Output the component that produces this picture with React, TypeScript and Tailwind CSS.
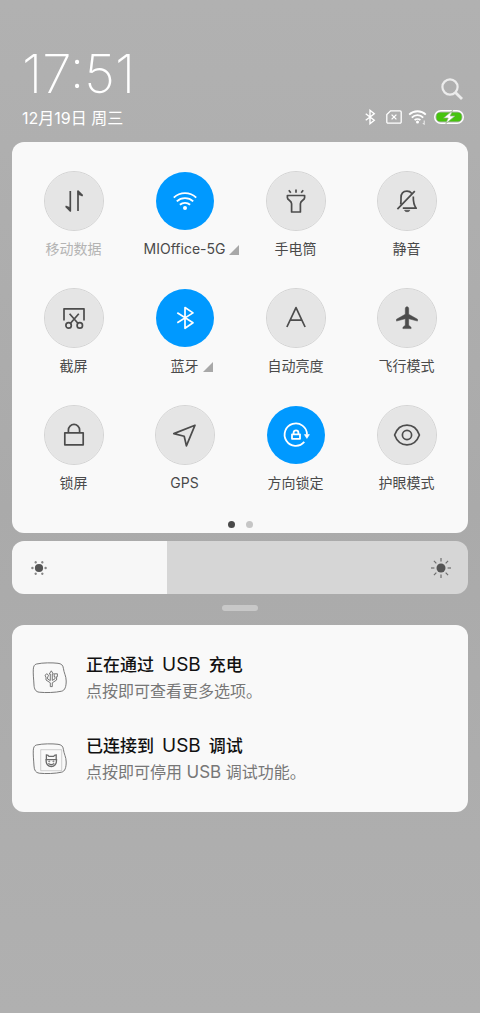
import React, { useState } from 'react'

interface Toggle {
  id: string
  label: string
  icon: React.ReactNode
  active?: boolean
  disabled?: boolean
  expandable?: boolean
}

interface Notice {
  id: string
  before: string
  after: string
  body: React.ReactNode
  icon: React.ReactNode
}

const icons = {
  data: (
    <>
      <path d="M11.3 5v20L6.8 20.4M19 25V5l4.5 4.6" />
      <path d="M11.3 25v-3.5L6.6 20zM19 5v3.5l4.7 1.5z" fill="currentColor" strokeWidth="0.6" />
    </>
  ),
  wifi: (
    <>
      <path d="M3.8 11.6a16.3 16.3 0 0 1 22.4 0M6.8 15.4a12 12 0 0 1 16.4 0M9.9 18.8a7.6 7.6 0 0 1 10.2 0" strokeWidth="1.9" />
      <circle cx="15" cy="22" r="2" fill="currentColor" stroke="none" />
    </>
  ),
  torch: (
    <path d="M6.4 9.5h17.2v2.2c0 2.600-4.200 2.600-4.200 6V26h-8.800v-8.300c0-3.400-4.200-3.400-4.200-6zM15 3.400v3.400M7.800 4.200l2 2.600M22.200 4.200l-2 2.600" />
  ),
  mute: (
    <>
      <path d="M8.600 18.600c.5-1.600.4-3.600.4-6.600 0-4.400 2.500-6.800 6-6.800 2 0 3.500.7 4.600 2.100M21.300 10.500c-.2 6.200.3 8.300 2.900 11.700H10.800M5.400 23.200 22.800 5.200" />
      <path d="M12.500 24.200h5.400c-.7 2-4.700 2-5.400 0z" fill="currentColor" strokeWidth="0.5" />
    </>
  ),
  scissors: (
    <>
      <path d="M5 17.5V5.8h20v11.7M10.600 10.800l8.300 9.400M19.800 10.800l-8.300 9.400" />
      <circle cx="9.6" cy="22.4" r="2.7" />
      <circle cx="20.8" cy="22.4" r="2.7" />
    </>
  ),
  bluetooth: <path d="M7.3 9.7 23 19.7 15 25.3V4.500l8 5.400L7.300 19.700" />,
  auto: <path d="M5.900 24 15 4.600 24.100 24M9.300 17.200h11.400" />,
  plane: (
    <path
      d="M13.3 5.600c0-2.400 3.400-2.400 3.400 0v5.700l8.800 4.900v1.900l-8.800-2.400v6.600l2.400 2v1.300h-8.200v-1.300l2.400-2v-6.600l-8.800 2.400v-1.900l8.800-4.900z"
      fill="currentColor"
      strokeWidth="0.5"
    />
  ),
  lock: <path d="M5.800 12.800h18.400v12H5.800zM9.400 12.600V10a5.600 5.600 0 0 1 11.200 0v2.600" />,
  gps: <path d="M25 5.200 3.800 13.600l10.400 2.600 2.200 9.600z" />,
  rotation: (
    <>
      <path d="M23.300 21.900A11.200 11.200 0 1 1 26 14.600M11 14.300h8v4.500h-8zM12.600 14.200v-1.500a2.400 2.400 0 0 1 4.800 0v1.500" strokeWidth="1.8" />
      <path d="M23.400 14.600h5l-2.500 3.800z" fill="currentColor" strokeWidth="0.6" />
    </>
  ),
  eye: (
    <>
      <path d="M2.600 15C5 8.400 9.600 5.200 15 5.200s10 3.200 12.400 9.800C25 21.600 20.400 24.800 15 24.800S5 21.600 2.600 15z" />
      <circle cx="15" cy="15" r="4.6" />
    </>
  ),
}

const initialToggles: Toggle[] = [
  { id: 'data', label: '移动数据', icon: icons.data, disabled: true },
  { id: 'wifi', label: 'MIOffice-5G', icon: icons.wifi, active: true, expandable: true },
  { id: 'torch', label: '手电筒', icon: icons.torch },
  { id: 'mute', label: '静音', icon: icons.mute },
  { id: 'screenshot', label: '截屏', icon: icons.scissors },
  { id: 'bluetooth', label: '蓝牙', icon: icons.bluetooth, active: true, expandable: true },
  { id: 'brightness', label: '自动亮度', icon: icons.auto },
  { id: 'airplane', label: '飞行模式', icon: icons.plane },
  { id: 'lock', label: '锁屏', icon: icons.lock },
  { id: 'gps', label: 'GPS', icon: icons.gps },
  { id: 'rotation', label: '方向锁定', icon: icons.rotation, active: true },
  { id: 'eye', label: '护眼模式', icon: icons.eye },
]

const notices: Notice[] = [
  {
    id: 'charging',
    before: '正在通过',
    after: '充电',
    body: '点按即可查看更多选项。',
    icon: (
      <path
        d="M19.300 8.800l2 3.200h-1v6.400l2.700-1.600v-2.200h-.8v-2.800h3.200v2.800h-.8v3.400l-4.300 2.800v3.800h-2v-3.800l-4.300-2.800v-3a1.600 1.600 0 1 1 1.600 0v2l2.700 1.600V12h-1z"
        strokeWidth="0.9"
      />
    ),
  },
  {
    id: 'debugging',
    before: '已连接到',
    after: '调试',
    body: (
      <>
        点按即可停用 <span className="text-[17px]">USB</span> 调试功能。
      </>
    ),
    icon: (
      <>
        <path d="M8.7 6.700h21v21h-21z" strokeWidth="0.3" />
        <path d="M14.400 16.500v-4.700c1.400 0 2.200.7 2.600 1.600h4.600c.4-.9 1.200-1.600 2.600-1.600v4.700" strokeWidth="1.3" />
        <path d="M13.400 16.600h11.800M14.200 16.600c-1.200 9.200 11.400 9.200 10.200 0M16.400 20.400c1.400 1.500 4.400 1.500 5.800 0" strokeWidth="1.3" />
        <circle cx="17.200" cy="18.400" r="0.5" />
        <circle cx="21.400" cy="18.400" r="0.5" />
      </>
    ),
  },
]

function StatusIcons() {
  return (
    <div className="flex items-center gap-1.5 text-white">
      <svg width="16" height="16" viewBox="0 0 30 30" fill="none" stroke="currentColor" strokeWidth="2.6" className="mr-0.5">
        <path d="M7 9 23 21l-8 6.500v-25L23 9 7 21" />
      </svg>
      <svg width="16" height="14" viewBox="0 0 16 14" fill="none" stroke="currentColor" strokeWidth="1.3">
        <path d="M4.600.8H14a1.200 1.200 0 0 1 1.200 1.200v10a1.200 1.200 0 0 1-1.200 1.200H2A1.200 1.200 0 0 1 .8 12V4.600z" />
        <path d="M5.600 4.600l4.800 4.800M10.400 4.600 5.600 9.400" />
      </svg>
      <svg width="20" height="16" viewBox="0 0 20 16" fill="none" stroke="currentColor" strokeWidth="1.8">
        <path d="M1.200 5.600a12 12 0 0 1 16.600 0M3.800 8.600a8 8 0 0 1 11.400 0M6.600 11.200a4.200 4.200 0 0 1 5.800 0" />
        <circle cx="9.5" cy="13" r="1.5" fill="currentColor" stroke="none" />
        <path d="M16.200 11.500v4M14.800 14l1.400 1.500" strokeWidth="0.8" />
      </svg>
      <svg width="30" height="14" viewBox="0 0 30 14">
        <rect x="0.7" y="0.7" width="28.6" height="12.6" rx="6.3" fill="none" stroke="currentColor" strokeWidth="1.4" />
        <rect x="2.400" y="2.400" width="25.200" height="9.200" rx="4" fill="#46c40f" />
        <path d="M18.600.4 9.600 8h4.600l-2.400 5.600L21 6h-4.800z" fill="currentColor" stroke="#8fae80" strokeWidth="0.7" />
      </svg>
    </div>
  )
}

function ToggleTile({ toggle, onToggle }: { toggle: Toggle; onToggle: () => void }) {
  return (
    <button
      onClick={onToggle}
      disabled={toggle.disabled}
      aria-pressed={!!toggle.active}
      className="flex flex-col items-center gap-2"
    >
      <span
        className={`flex items-center justify-center w-15 h-15 rounded-full border bg-clip-padding ${
          toggle.active ? 'bg-[#0099ff] border-transparent text-white' : 'bg-[#e5e5e5] border-[#d4d4d4] text-[#4c4c4c]'
        }`}
      >
        <svg width="30" height="30" viewBox="0 0 30 30" fill="none" stroke="currentColor" strokeWidth="1.7" strokeLinejoin="round">
          {toggle.icon}
        </svg>
      </span>
      <span className={`relative text-sm leading-5 whitespace-nowrap ${toggle.disabled ? 'text-[#b4b4b4]' : 'text-[#4a4a4a]'}`}>
        {toggle.label}
        {toggle.expandable && (
          <svg className="absolute left-full bottom-1 ml-1" width="10" height="10" viewBox="0 0 10 10">
            <path d="M10 0v10H0z" fill="#a8a8a8" />
          </svg>
        )}
      </span>
    </button>
  )
}

function BrightnessSlider() {
  const [level, setLevel] = useState(34)

  return (
    <div className="relative h-[53px] text-[#555555]">
      <input
        type="range"
        aria-label="亮度"
        min={0}
        max={100}
        value={level}
        onChange={e => setLevel(Number(e.target.value))}
        className="block w-full h-full rounded-xl appearance-none cursor-pointer [&::-webkit-slider-thumb]:opacity-0"
        style={{ background: `linear-gradient(to right, #f7f7f7 ${level}%, #d6d6d6 ${level}%)` }}
      />
      <div className="absolute inset-0 px-4 flex items-center justify-between pointer-events-none">
        <svg width="22" height="22" viewBox="0 0 22 22" fill="currentColor">
          <circle cx="11" cy="11" r="4.1" />
          {[0, 60, 120, 180, 240, 300].map(angle => (
            <circle key={angle} cx="17.600" cy="11" r="1.200" opacity="0.7" transform={`rotate(${angle} 11 11)`} />
          ))}
        </svg>
        <svg width="22" height="22" viewBox="0 0 22 22" fill="currentColor">
          <circle cx="11" cy="11" r="4.5" />
          {[0, 45, 90, 135, 180, 225, 270, 315].map(angle => (
            <path key={angle} d="M17.600 11h3.400" stroke="currentColor" strokeWidth="1.2" opacity="0.8" transform={`rotate(${angle} 11 11)`} />
          ))}
        </svg>
      </div>
    </div>
  )
}

export default function App() {
  const [toggles, setToggles] = useState(initialToggles)

  const handleToggle = (id: string) => {
    setToggles(prev => prev.map(t => (t.id === id ? { ...t, active: !t.active } : t)))
  }

  return (
    <div className="min-h-screen px-3 pt-12 bg-linear-to-b from-[#b1b1b1] via-[#aaaaaa] to-[#b0b0b0] font-[Inter,'Noto_Sans_CJK_SC',sans-serif]">
      <header className="flex items-end justify-between pl-2.5 pr-1 pb-3.5 text-white">
        <div>
          <h1 className="text-[53px] leading-[52px] font-extralight">17:51</h1>
          <p className="mt-2 text-base leading-5">12月19日 周三</p>
        </div>
        <div className="flex flex-col items-end gap-2 pb-[3px]">
          <button aria-label="搜索" className="text-[#ececec]">
            <svg width="24" height="24" viewBox="0 0 24 24" fill="none" stroke="currentColor" strokeWidth="2.2">
              <circle cx="10" cy="10" r="7.6" />
              <path d="M15.400 15.400 22 22" strokeWidth="2.8" />
            </svg>
          </button>
          <StatusIcons />
        </div>
      </header>

      <section className="rounded-xl bg-[#f9f9f9] px-1.5 pt-[29px] pb-[5px]">
        <div className="grid grid-cols-4 gap-y-[29px]">
          {toggles.map(toggle => (
            <ToggleTile key={toggle.id} toggle={toggle} onToggle={() => handleToggle(toggle.id)} />
          ))}
        </div>
        <div className="flex justify-center gap-[11px] mt-7">
          <span className="w-[7px] h-[7px] rounded-full bg-[#4a4a4a]" />
          <span className="w-[7px] h-[7px] rounded-full bg-[#c6c6c6]" />
        </div>
      </section>

      <div className="mt-2">
        <BrightnessSlider />
      </div>

      <div className="w-9 h-1.5 mx-auto mt-[11px] rounded-full bg-[#c8c8c8]" />

      <section className="mt-3.5 rounded-xl bg-[#f9f9f9] px-5 py-[27px] flex flex-col gap-[29px]">
        {notices.map(notice => (
          <article key={notice.id} className="flex items-center gap-[18px]">
            <svg width="36" height="32" viewBox="0 0 36 32" fill="none" stroke="#6a6a6a" strokeWidth="0.9" className="shrink-0">
              <path d="M4.500 2C11 .6 20 .6 26 1.300c3.200.4 5 1.700 5.400 5C31.900 11 34.200 14 34.200 19c0 5.500-1.200 9.400-4.600 10.200-6 1.400-16 1.700-22.400 1C3.600 29.800 2.200 27 2 23 1.700 17.500 1 12 1.300 7.200 1.500 4.200 2.400 2.500 4.500 2z" />
              {notice.icon}
            </svg>
            <div>
              <h2 className="flex items-center gap-2 text-[17px] leading-[26px] font-medium text-[#111111]">
                {notice.before}
                <span className="text-[19px] font-normal">USB</span>
                {notice.after}
              </h2>
              <p className="text-base leading-[26px] text-[#777777]">{notice.body}</p>
            </div>
          </article>
        ))}
      </section>
    </div>
  )
}
